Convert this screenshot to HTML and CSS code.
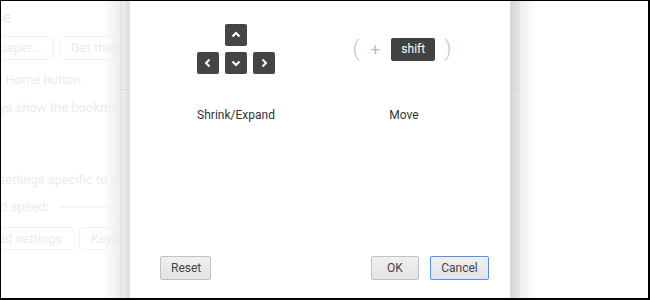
FILE: index.html
```html
<!DOCTYPE html>
<html lang="en">
<head>
  <meta charset="UTF-8" />
  <title>Keyboard shortcuts</title>
  <link rel="stylesheet" href="styles.css">
</head>
<body>
  <div class="frame">
    <!-- faded settings page behind the dialog -->
    <div class="page">
      <div class="page-content">
        <div class="section-title">Appearance</div>
        <div class="row row-buttons first-buttons">
          <span class="ghost-btn">Set wallpaper...</span>
          <span class="ghost-btn">Get themes</span>
        </div>
        <div class="row row-home">Show Home button</div>
        <div class="row row-bookmarks">Always show the bookmarks bar</div>
        <div class="row row-device">Change settings specific to your device</div>
        <div class="row row-speed">
          <span>Touchpad speed:</span>
          <span class="slider"></span>
          <span class="slider-box"></span>
        </div>
        <div class="row row-buttons last-buttons">
          <span class="ghost-btn">Touchpad settings</span>
          <span class="ghost-btn">Keyboard settings</span>
        </div>
      </div>
    </div>
    <div class="edge edge-left"></div>

    <div class="dialog">
      <div class="shortcuts">
        <div class="shortcut">
          <div class="keys-arrows">
            <span class="key key-up">
              <svg width="22" height="22" viewBox="0 0 22 22"><polyline points="7.5,12.5 11,9 14.5,12.5" /></svg>
            </span>
            <span class="key key-bottom">
              <svg width="22" height="22" viewBox="0 0 22 22"><polyline points="12.5,7.5 9,11 12.5,14.5" /></svg>
            </span>
            <span class="key key-bottom">
              <svg width="22" height="22" viewBox="0 0 22 22"><polyline points="7.5,9.5 11,13 14.5,9.5" /></svg>
            </span>
            <span class="key key-bottom">
              <svg width="22" height="22" viewBox="0 0 22 22"><polyline points="9.5,7.5 13,11 9.5,14.5" /></svg>
            </span>
          </div>
          <div class="shortcut-label">Shrink/Expand</div>
        </div>
        <div class="shortcut">
          <div class="keys-combo">
            <span class="paren">(</span>
            <span class="plus">+</span>
            <span class="key key-text">shift</span>
            <span class="paren">)</span>
          </div>
          <div class="shortcut-label">Move</div>
        </div>
      </div>

      <div class="dialog-footer">
        <button class="btn btn-reset">Reset</button>
        <div class="footer-right">
          <button class="btn btn-ok">OK</button>
          <button class="btn btn-cancel">Cancel</button>
        </div>
      </div>
    </div>

    <div class="edge edge-right"></div>
    <div class="page-right"></div>
  </div>
</body>
</html>
```

FILE: styles.css
```css
* {
  box-sizing: border-box;
}

html, body {
  margin: 0;
  padding: 0;
  background: #fff;
  font-family: Roboto, 'Liberation Sans', sans-serif;
}

.frame {
  width: 650px;
  height: 300px;
  display: flex;
  border-style: solid;
  border-color: #000;
  border-width: 1px 2px 2px 1px;
  overflow: hidden;
}

/* background page */
.page {
  width: 119px;
  flex-shrink: 0;
  overflow: hidden;
  background: linear-gradient(to right, #fff 86%, #ededed);
}

.page-content {
  width: 119px;
  color: #f1eaea;
  font-size: 13px;
  white-space: nowrap;
}

.section-title {
  font-size: 17px;
  line-height: 20px;
  margin: 6px 0 0 -80px;
}

.row {
  line-height: 16px;
  display: flex;
  align-items: center;
}

.row-buttons {
  gap: 5px;
}

.ghost-btn {
  height: 24px;
  line-height: 22px;
  padding: 0 11px;
  border: 1px solid #f5f2f2;
  border-radius: 2px;
  flex-shrink: 0;
}

.first-buttons {
  margin: 9px 0 0 -59px;
}

.row-home {
  margin: 12px 0 0 -31px;
}

.row-bookmarks {
  margin: 12px 0 0 -30px;
}

.row-device {
  margin: 56px 0 0 -50px;
}

.row-speed {
  height: 20px;
  margin: 9px 0 0 -51px;
  gap: 10px;
}

.slider {
  width: 57px;
  height: 2px;
  background: #f9f6ee;
  flex-shrink: 0;
}

.slider-box {
  width: 12px;
  height: 20px;
  border: 1px solid #f4f1f1;
  flex-shrink: 0;
  margin-left: -8px;
}

.last-buttons {
  margin: 10px 0 0 -58px;
}

.last-buttons .ghost-btn {
  height: 23px;
}

/* dialog edges */
.edge {
  width: 10px;
  flex-shrink: 0;
}

.edge-left {
  background:
    linear-gradient(to bottom, transparent 88px, #dadada 88px, #dadada 89px, transparent 89px),
    linear-gradient(to right, #e3e3e3, #ececec 30%, #dcdcdc);
}

.edge-right {
  background:
    linear-gradient(to bottom, transparent 88px, #d5d5d5 88px, #d5d5d5 89px, transparent 89px),
    linear-gradient(to right, #d6d6d6, #e6e6e6);
}

.page-right {
  flex: 1;
  background: linear-gradient(to right, #efefef, #fff 17px);
}

/* dialog */
.dialog {
  width: 380px;
  flex-shrink: 0;
  background: #fff;
  display: flex;
  flex-direction: column;
}

.shortcuts {
  display: grid;
  grid-template-columns: 1fr 1fr;
  padding: 23px 22px 0;
}

.shortcut {
  display: flex;
  flex-direction: column;
  align-items: center;
}

.keys-arrows {
  display: grid;
  grid-template-columns: repeat(3, 22px);
  grid-template-rows: 22px 22px;
  gap: 6px;
}

.key {
  width: 22px;
  height: 22px;
  background: #454545;
  border-radius: 2px;
  display: flex;
  align-items: center;
  justify-content: center;
}

.key svg polyline {
  fill: none;
  stroke: #fff;
  stroke-width: 2;
}

.key-up {
  grid-row: 1;
  grid-column: 2;
}

.key-bottom {
  grid-row: 2;
}

.keys-combo {
  height: 50px;
  display: flex;
  align-items: center;
  gap: 9px;
  margin-right: 4px;
}

.paren {
  font-size: 22px;
  font-weight: 300;
  color: #c6c6c6;
  line-height: 24px;
}

.plus {
  font-size: 17px;
  color: #bdbdbd;
  margin: 0 2px;
}

.key-text {
  width: 44px;
  height: 23px;
  color: #fff;
  font-size: 12px;
  background: #424242;
}

.shortcut-label {
  margin-top: 34px;
  font-size: 12px;
  line-height: 14px;
  color: #333;
}

.dialog-footer {
  margin-top: auto;
  padding: 0 21px 18px 30px;
  display: flex;
  justify-content: space-between;
}

.footer-right {
  display: flex;
  gap: 11px;
}

.btn {
  height: 24px;
  padding: 0 10px;
  font-family: Roboto, 'Liberation Sans', sans-serif;
  font-size: 12px;
  color: #444;
  border: 1px solid #c2c2c2;
  border-radius: 2px;
  background: linear-gradient(to bottom, #f0f0f0, #e3e3e3);
}

.btn-reset {
  width: 51px;
}

.btn-ok {
  width: 48px;
}

.btn-cancel {
  width: 59px;
  border-color: #4d90fe;
}
```
